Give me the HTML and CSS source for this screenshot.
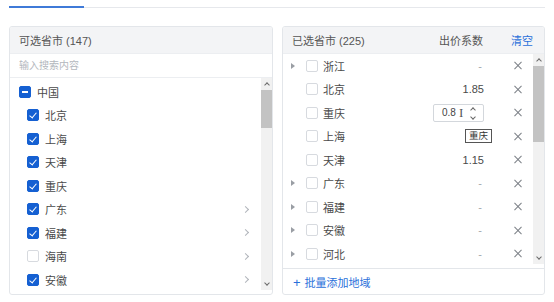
FILE: index.html
```html
<!DOCTYPE html>
<html lang="zh-CN">
<head>
  <meta charset="UTF-8">
  <meta name="viewport" content="width=device-width, initial-scale=1.0">
  <title>地域选择</title>
  <link rel="stylesheet" href="styles.css">
</head>
<body>
  <div class="page">
    <div class="tabs"><div class="tab-active"></div></div>

    <div class="panels">
      <!-- 可选 -->
      <section class="panel panel-left">
        <div class="panel-head">
          <span class="title">可选省市 (147)</span>
        </div>
        <div class="search">
          <input type="text" placeholder="输入搜索内容">
        </div>
        <div class="panel-body">
          <ul class="tree">
            <li class="row"><span class="cb cb-half"></span><span class="name">中国</span></li>
            <li class="row child"><span class="cb cb-on"></span><span class="name">北京</span></li>
            <li class="row child"><span class="cb cb-on"></span><span class="name">上海</span></li>
            <li class="row child"><span class="cb cb-on"></span><span class="name">天津</span></li>
            <li class="row child"><span class="cb cb-on"></span><span class="name">重庆</span></li>
            <li class="row child"><span class="cb cb-on"></span><span class="name">广东</span><span class="chev"></span></li>
            <li class="row child"><span class="cb cb-on"></span><span class="name">福建</span><span class="chev"></span></li>
            <li class="row child"><span class="cb"></span><span class="name">海南</span><span class="chev"></span></li>
            <li class="row child"><span class="cb cb-on"></span><span class="name">安徽</span><span class="chev"></span></li>
          </ul>
          <div class="scrollbar">
            <span class="sb-arrow sb-up"></span>
            <div class="sb-track"><div class="sb-thumb thumb-left"></div></div>
            <span class="sb-arrow sb-down"></span>
          </div>
        </div>
      </section>

      <!-- 已选 -->
      <section class="panel panel-right">
        <div class="panel-head">
          <span class="title">已选省市 (225)</span>
          <span class="col-price">出价系数</span>
          <a class="clear">清空</a>
        </div>
        <div class="panel-body">
          <ul class="tree picked">
            <li class="row"><span class="tri"></span><span class="cb"></span><span class="name">浙江</span><span class="val dash">-</span><span class="del"></span></li>
            <li class="row"><span class="tri none"></span><span class="cb"></span><span class="name">北京</span><span class="val">1.85</span><span class="del"></span></li>
            <li class="row"><span class="tri none"></span><span class="cb"></span><span class="name">重庆</span>
              <span class="val">
                <span class="num-input">
                  <span class="num">0.8</span>
                  <span class="ibeam">I</span>
                  <span class="spin"><span class="spin-up"></span><span class="spin-down"></span></span>
                </span>
              </span>
              <span class="del"></span>
              <span class="tooltip">重庆</span>
            </li>
            <li class="row"><span class="tri none"></span><span class="cb"></span><span class="name">上海</span><span class="val"></span><span class="del"></span></li>
            <li class="row"><span class="tri none"></span><span class="cb"></span><span class="name">天津</span><span class="val">1.15</span><span class="del"></span></li>
            <li class="row"><span class="tri"></span><span class="cb"></span><span class="name">广东</span><span class="val dash">-</span><span class="del"></span></li>
            <li class="row"><span class="tri"></span><span class="cb"></span><span class="name">福建</span><span class="val dash">-</span><span class="del"></span></li>
            <li class="row"><span class="tri"></span><span class="cb"></span><span class="name">安徽</span><span class="val dash">-</span><span class="del"></span></li>
            <li class="row"><span class="tri"></span><span class="cb"></span><span class="name">河北</span><span class="val dash">-</span><span class="del"></span></li>
          </ul>
          <div class="scrollbar">
            <span class="sb-arrow sb-up"></span>
            <div class="sb-track"><div class="sb-thumb thumb-right"></div></div>
            <span class="sb-arrow sb-down"></span>
          </div>
        </div>
        <div class="panel-foot">
          <a class="add-link"><span class="plus">+</span>批量添加地域</a>
        </div>
      </section>
    </div>
  </div>
</body>
</html>
```

FILE: styles.css
```css
* {
  box-sizing: border-box;
}

body {
  margin: 0;
  padding: 0;
  background: #fff;
  font-family: "Liberation Sans", "Noto Sans CJK SC", sans-serif;
  font-size: 11px;
  color: #4a4a4a;
}

ul {
  list-style: none;
  margin: 0;
  padding: 0;
}

.page {
  padding: 6px 9px 0;
}

/* tab underline */
.tabs {
  height: 2px;
  border-bottom: 1px solid #e6e8ec;
}

.tab-active {
  width: 75px;
  height: 2px;
  background: #3f7ad8;
}

.panels {
  display: flex;
  gap: 9px;
  margin-top: 18px;
}

.panel {
  border: 1px solid #e3e6ea;
  border-radius: 3px;
  background: #fff;
  display: flex;
  flex-direction: column;
  height: 269px;
  overflow: hidden;
}

.panel-left {
  width: 264px;
}

.panel-right {
  width: 263px;
}

.panel-head {
  height: 27px;
  background: #f3f4f6;
  border-bottom: 1px solid #eceef1;
  display: flex;
  align-items: center;
  padding: 0 11px 0 9px;
  color: #555;
  flex-shrink: 0;
  white-space: nowrap;
}

.panel-head .title {
  flex: 1;
}

.col-price {
  margin-right: 28px;
  color: #555;
}

.clear {
  color: #2a70da;
}

.search {
  height: 24px;
  border-bottom: 1px solid #eceef1;
  display: flex;
  align-items: center;
  padding: 0 9px;
  flex-shrink: 0;
}

.search input {
  border: none;
  outline: none;
  padding: 0;
  font: inherit;
  font-size: 10px;
  width: 100%;
  color: #444;
}

.search input::placeholder {
  color: #b3b7bd;
}

.panel-body {
  flex: 1;
  display: flex;
  min-height: 0;
  overflow: hidden;
}

.tree {
  flex: 1;
  padding-top: 2px;
}

.picked {
  padding-top: 0;
}

.row {
  height: 23.5px;
  display: flex;
  align-items: center;
  padding-left: 9px;
  position: relative;
}

.row.child {
  padding-left: 17px;
}

.name {
  flex: 1;
  margin-left: 6px;
  color: #4a4a4a;
}

/* checkboxes */
.cb {
  width: 12px;
  height: 12px;
  border: 1px solid #d7dadf;
  border-radius: 2px;
  background: #fff;
  position: relative;
  flex-shrink: 0;
}

.cb-on,
.cb-half {
  background: #1560d2;
  border-color: #1560d2;
}

.cb-on::after {
  content: "";
  position: absolute;
  left: 3px;
  top: 1px;
  width: 3px;
  height: 6px;
  border-right: 1.5px solid #fff;
  border-bottom: 1.5px solid #fff;
  transform: rotate(40deg);
}

.cb-half::after {
  content: "";
  position: absolute;
  left: 2px;
  top: 4.5px;
  width: 6px;
  height: 1.5px;
  background: #fff;
}

.chev {
  width: 5px;
  height: 5px;
  border-right: 1px solid #b0b4ba;
  border-top: 1px solid #b0b4ba;
  transform: rotate(45deg);
  margin-right: 13px;
}

/* picked list */
.picked .row {
  padding-left: 8px;
}

.tri {
  width: 0;
  height: 0;
  border-left: 4px solid #9a9ea4;
  border-top: 3px solid transparent;
  border-bottom: 3px solid transparent;
  margin-right: 11px;
}

.tri.none {
  border-left-color: transparent;
}

.picked .name {
  margin-left: 5px;
}

.val {
  width: 70px;
  color: #4a4a4a;
  display: flex;
  justify-content: flex-end;
}

.val.dash {
  color: #a3a7ad;
  padding-right: 2px;
}

.del {
  width: 20px;
  height: 20px;
  margin: 0 5px 0 24px;
  position: relative;
}

.del::before,
.del::after {
  content: "";
  position: absolute;
  left: 5px;
  top: 9.5px;
  width: 10px;
  height: 1px;
  background: #7c8087;
  transform: rotate(45deg);
}

.del::after {
  transform: rotate(-45deg);
}

.num-input {
  width: 51px;
  height: 18px;
  border: 1px solid #d3d7dc;
  border-radius: 2px;
  display: flex;
  align-items: center;
  padding-left: 8px;
  font-size: 10px;
  flex-shrink: 0;
}

.num {
  width: 17px;
  color: #444;
}

.ibeam {
  font-family: "Liberation Serif", serif;
  font-size: 13px;
  color: #555;
  width: 9px;
}

.spin {
  width: 9px;
  height: 16px;
  display: flex;
  flex-direction: column;
  align-items: center;
  justify-content: space-between;
  padding: 3px 0 2px;
}

.spin-up,
.spin-down {
  width: 4px;
  height: 4px;
  border-left: 1px solid #666;
  border-top: 1px solid #666;
  transform: rotate(45deg);
}

.spin-down {
  transform: rotate(225deg);
}

.tooltip {
  position: absolute;
  left: 182px;
  top: 28px;
  border: 1px solid #555;
  background: #fff;
  font-size: 9.5px;
  color: #333;
  padding: 0 3px;
  line-height: 12px;
  z-index: 2;
}

/* scrollbar */
.scrollbar {
  width: 11px;
  background: #f1f1f1;
  display: flex;
  flex-direction: column;
  align-items: center;
  flex-shrink: 0;
  margin-bottom: 4px;
}

.sb-arrow {
  width: 4px;
  height: 4px;
  border-left: 1.5px solid #6b6b6b;
  border-top: 1.5px solid #6b6b6b;
  transform: rotate(45deg);
  margin: 5px 0 3px;
}

.sb-down {
  transform: rotate(225deg);
  margin: 3px 0 5px;
}

.sb-track {
  flex: 1;
  width: 100%;
}

.sb-thumb {
  width: 100%;
  background: #c3c3c3;
}

.thumb-left {
  height: 38px;
}

.thumb-right {
  height: 76px;
}

.panel-foot {
  height: 26px;
  border-top: 1px solid #e3e6ea;
  display: flex;
  align-items: center;
  padding-left: 10px;
  flex-shrink: 0;
}

.add-link {
  color: #2a70da;
}

.plus {
  font-size: 13px;
  margin-right: 4px;
}
```
